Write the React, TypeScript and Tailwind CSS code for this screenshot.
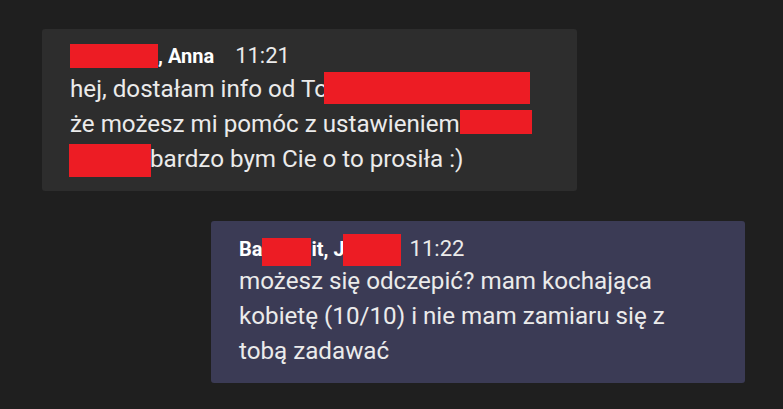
const Redact = ({ className }: { className: string }) => (
  <span className={`inline-block bg-[#ed1c24] ${className}`} />
);

const App = () => {
  return (
    <div className="min-h-[409px] w-[783px] bg-[#1f1f1f] pt-[29px] font-['Roboto','Noto_Sans',sans-serif] text-[#ebebeb]">
      {/* incoming message */}
      <div className="ml-[42px] h-[162px] w-[535px] rounded-[3px] bg-[#2d2d2d] pl-[28px] pt-[13px]">
        <div className="h-[28px] whitespace-nowrap text-[22px] leading-[28px]">
          <Redact className="h-[24px] w-[88px] align-[-5px]" />
          <span className="text-[20px] font-bold text-white">, Anna</span>
          <span className="ml-[21px]">11:21</span>
        </div>
        <div className="mt-[2px] whitespace-nowrap text-[24.2px] leading-[35px]">
          <div>
            hej, dostałam info od To
            <Redact className="-ml-[4px] h-[32px] w-[206px] align-[-7px]" />
          </div>
          <div>
            że możesz mi pomóc z ustawieniem
            <Redact className="h-[24px] w-[72px] align-[-2px]" />
          </div>
          <div>
            <Redact className="-ml-[1px] h-[33px] w-[82px] align-[-10px]" />
            <span className="-ml-[1px]">bardzo bym Cie o to prosiła :)</span>
          </div>
        </div>
      </div>

      {/* outgoing message */}
      <div className="ml-[211px] mt-[30px] h-[162px] w-[534px] rounded-[3px] bg-[#3b3b55] pl-[28px] pt-[13px]">
        <div className="h-[28px] whitespace-nowrap text-[22px] leading-[28px]">
          <span className="text-[20px] font-bold text-white">Ba</span>
          <Redact className="h-[28px] w-[49px] align-[-10px]" />
          <span className="text-[20px] font-bold text-white">it, J</span>
          <Redact className="-ml-[2px] h-[32px] w-[58px] align-[-10px]" />
          <span className="ml-[9px]">11:22</span>
        </div>
        <div className="mt-[2px] whitespace-nowrap text-[24.2px] leading-[35px]">
          <div>możesz się odczepić? mam kochająca</div>
          <div>kobietę (10/10) i nie mam zamiaru się z</div>
          <div>tobą zadawać</div>
        </div>
      </div>
    </div>
  );
};

export default App;
